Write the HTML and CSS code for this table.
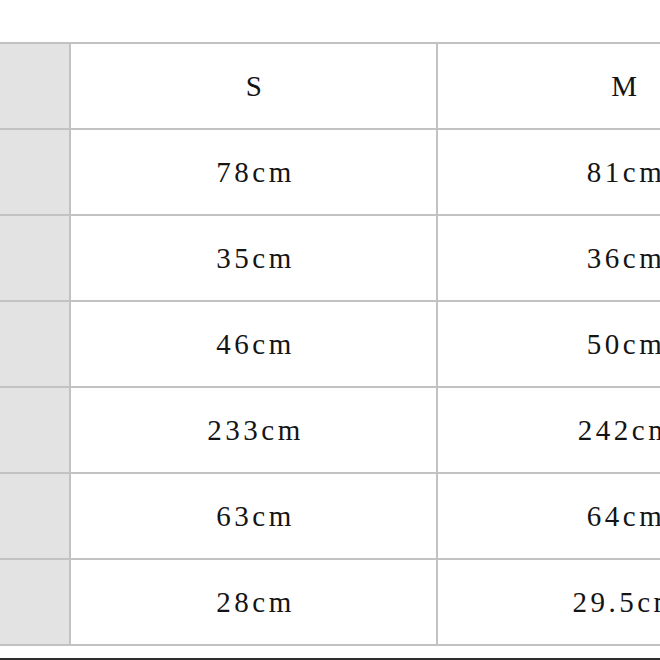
FILE: index.html
```html
<!DOCTYPE html>
<html>
<head>
<meta charset="utf-8">
<link rel="stylesheet" href="styles.css">
</head>
<body>
<div class="page">
  <div class="grid">
    <div class="cell side"></div><div class="cell">S</div><div class="cell">M</div>
    <div class="cell side"></div><div class="cell">78cm</div><div class="cell">81cm</div>
    <div class="cell side"></div><div class="cell">35cm</div><div class="cell">36cm</div>
    <div class="cell side"></div><div class="cell">46cm</div><div class="cell">50cm</div>
    <div class="cell side"></div><div class="cell">233cm</div><div class="cell">242cm</div>
    <div class="cell side"></div><div class="cell">63cm</div><div class="cell">64cm</div>
    <div class="cell side"></div><div class="cell">28cm</div><div class="cell">29.5cm</div>
  </div>
  <div class="footer-bar"></div>
</div>
</body>
</html>
```

FILE: styles.css
```css
html, body {
  margin: 0;
  padding: 0;
  background: #ffffff;
  overflow: hidden;
}
.page {
  width: 660px;
  height: 660px;
  overflow: hidden;
  display: flex;
  flex-direction: column;
  padding-top: 42px;
  box-sizing: border-box;
}
.grid {
  display: grid;
  grid-template-columns: 69px 365px 372px;
  grid-auto-rows: 84px;
  gap: 2px;
  padding: 2px 0;
  background: #c2c2c2;
  width: 810px;
  flex-shrink: 0;
}
.cell {
  background: #ffffff;
  display: flex;
  align-items: center;
  justify-content: center;
  padding-left: 4px;
  font-family: "Liberation Serif", "DejaVu Serif", serif;
  font-size: 29px;
  letter-spacing: 3.5px;
  color: #141414;
}
.side {
  background: #e3e3e3;
  padding-left: 0;
}
.footer-bar {
  margin-top: 12px;
  height: 4px;
  background: #2e2e2e;
  flex-shrink: 0;
}
```
